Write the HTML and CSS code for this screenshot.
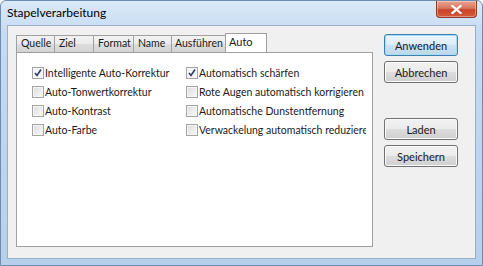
FILE: index.html
```html
<!doctype html>
<html lang="de">
<head>
	<meta charset="utf-8">
	<title>Stapelverarbeitung</title>
	<link rel="stylesheet" href="styles.css">
</head>
<body>
	<div class="window">
		<div class="titlebar">
			<span class="title">Stapelverarbeitung</span>
			<button class="close" title="Schließen">
				<svg width="11" height="9" viewBox="0 0 11 9"><path d="M1.5 1 L9.5 8 M9.5 1 L1.5 8" stroke="#fff" stroke-width="2.2" stroke-linecap="square"></path></svg>
			</button>
		</div>
		<div class="client">
			<div class="tabs">
				<div class="tabstrip">
					<div class="tab w39">Quelle</div>
					<div class="tab w40">Ziel</div>
					<div class="tab w41">Format</div>
					<div class="tab w39">Name</div>
					<div class="tab w55">Ausführen</div>
					<div class="tab active">Auto</div>
				</div>
				<div class="panel">
					<div class="column">
						<label class="check"><span class="box checked"></span>Intelligente Auto-Korrektur</label>
						<label class="check"><span class="box"></span>Auto-Tonwertkorrektur</label>
						<label class="check"><span class="box"></span>Auto-Kontrast</label>
						<label class="check"><span class="box"></span>Auto-Farbe</label>
					</div>
					<div class="column wide">
						<label class="check"><span class="box checked"></span>Automatisch schärfen</label>
						<label class="check"><span class="box"></span>Rote Augen automatisch korrigieren</label>
						<label class="check"><span class="box"></span>Automatische Dunstentfernung</label>
						<label class="check"><span class="box"></span>Verwackelung automatisch reduzieren</label>
					</div>
				</div>
			</div>
			<div class="buttons">
				<button class="btn default">Anwenden</button>
				<button class="btn">Abbrechen</button>
				<button class="btn gap">Laden</button>
				<button class="btn">Speichern</button>
			</div>
		</div>
	</div>
</body>
</html>
```

FILE: styles.css
```css
* {
	box-sizing: border-box;
}
html, body {
	margin: 0;
	padding: 0;
	width: 483px;
	height: 266px;
	overflow: hidden;
	background: #ffffff;
}
.window {
	width: 483px;
	height: 266px;
	display: flex;
	flex-direction: column;
	border: 1px solid #6d8cb2;
	border-radius: 6px 6px 0 0;
	background: linear-gradient(to bottom, #dbe9f8 0%, #c6dbf2 12%, #bcd4ef 60%, #b6d0ec 100%);
	font-family: "Segoe UI", Lato, sans-serif;
	font-size: 11px;
	color: #1a1a1a;
}
.titlebar {
	height: 24px;
	display: flex;
	justify-content: space-between;
	align-items: flex-start;
	padding-left: 6px;
}
.title {
	margin-top: 4px;
	font-size: 12px;
	color: #000000;
}
.close {
	width: 41px;
	height: 17px;
	margin-right: 5px;
	padding: 0;
	display: flex;
	justify-content: center;
	align-items: center;
	border: 1px solid #8c3a2d;
	border-top: none;
	border-radius: 0 0 4px 4px;
	background: linear-gradient(to bottom, #e8a493 0%, #d9765f 45%, #c8432b 55%, #d55a3e 100%);
	box-shadow: inset 0 0 0 1px rgba(255, 255, 255, 0.35);
}
.client {
	flex: 1;
	display: flex;
	margin: 0 6px 6px 6px;
	border: 1px solid #98aecb;
	background: #f0f0f0;
	padding: 7px 0 11px 8px;
}
.tabs {
	width: 357px;
	display: flex;
	flex-direction: column;
}
.tabstrip {
	height: 19px;
	display: flex;
	align-items: flex-end;
	font-size: 10.5px;
}
.tab {
	height: 17px;
	padding: 0 0 0 4px;
	margin-right: -1px;
	border: 1px solid #a0a0a0;
	border-bottom: none;
	background: linear-gradient(to bottom, #f2f2f2 0%, #ebebeb 50%, #dddddd 51%, #d4d4d4 100%);
	line-height: 15px;
	white-space: nowrap;
}
.w39 {
	width: 39px;
}
.w40 {
	width: 40px;
}
.w41 {
	width: 41px;
}
.w55 {
	width: 55px;
	padding-left: 3px;
}
.tab.active {
	height: 20px;
	width: 42px;
	margin-bottom: -1px;
	background: #ffffff;
	line-height: 16px;
	padding-left: 3px;
	font-size: 11px;
}
.panel {
	flex: 1;
	display: flex;
	border: 1px solid #a0a0a0;
	background: #ffffff;
	padding: 10px 0 0 15px;
	font-size: 10.5px;
}
.column {
	width: 154px;
	display: flex;
	flex-direction: column;
}
.column.wide {
	width: 180px;
	overflow: hidden;
}
.check {
	height: 19px;
	display: flex;
	align-items: center;
	white-space: nowrap;
}
.box {
	flex: none;
	width: 12px;
	height: 12px;
	margin-right: 1px;
	border: 1px solid #a4a4a4;
	background: linear-gradient(135deg, #dcdcdc 0%, #f4f4f4 80%);
	box-shadow: inset 0 0 0 1px #f5f5f5;
}
.box.checked {
	background: #f4f4f4 url("data:image/svg+xml;utf8,<svg xmlns='http://www.w3.org/2000/svg' width='10' height='10' viewBox='0 0 10 10'><path d='M2 5 L4 7.5 L8 1.5' fill='none' stroke='%23303c6c' stroke-width='1.6'/></svg>") center / 10px 10px no-repeat;
}
.buttons {
	width: 74px;
	margin-left: 11px;
	margin-top: 1px;
	display: flex;
	flex-direction: column;
}
.btn {
	height: 22px;
	margin-bottom: 5px;
	padding: 0;
	border: 1px solid #707070;
	border-radius: 3px;
	background: linear-gradient(to bottom, #f2f2f2 0%, #ebebeb 48%, #dddddd 52%, #cfcfcf 100%);
	box-shadow: inset 0 0 0 1px #fbfbfb;
	font-family: "Segoe UI", Lato, sans-serif;
	font-size: 11px;
	color: #1a1a1a;
}
.btn.default {
	border-color: #3c7fb1;
	box-shadow: inset 0 0 0 1px #a7dcf4;
	background: linear-gradient(to bottom, #ecf5fb 0%, #dcecf7 48%, #cbe2f1 52%, #bcd8ec 100%);
}
.btn.gap {
	margin-top: 30px;
}
```
